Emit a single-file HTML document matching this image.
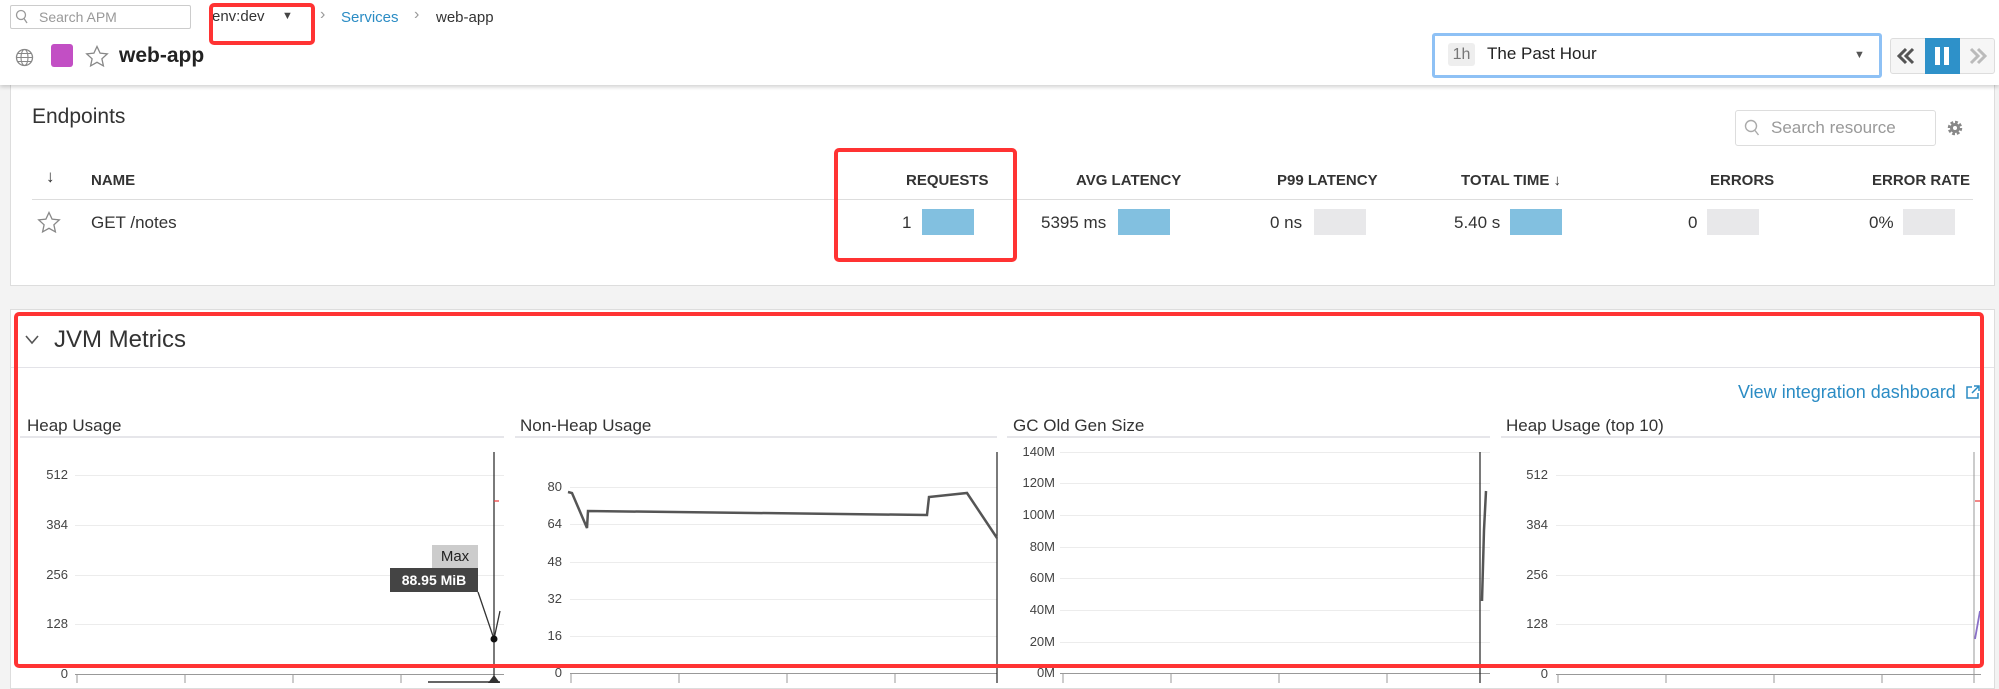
<!DOCTYPE html>
<html><head><meta charset="utf-8"><style>
*{box-sizing:border-box;margin:0;padding:0}
body{width:1999px;height:683px;overflow:hidden;background:#f3f3f3;font-family:"Liberation Sans",sans-serif;color:#333;position:relative}
.a{position:absolute;white-space:nowrap}
.hdr{position:absolute;left:0;top:0;width:1999px;height:85px;background:#fff;box-shadow:0 2px 4px rgba(0,0,0,.18);z-index:2}
.th{font-weight:bold;font-size:15px;color:#333;top:172px}
.td{font-size:17px;top:213px}
.bar{position:absolute;top:209px;width:52px;height:26px}
.b{background:#82c0e0}.g{background:#e8e8ea}
.grid{position:absolute;height:1px;background:#ececec}
.lbl{position:absolute;font-size:13px;color:#444;text-align:right;width:50px}
.ttl{font-size:17px;color:#333;top:416px}
.ul{position:absolute;top:436px;height:2px;background:#e6e6ea}
.red{position:absolute;border:4px solid #f33;border-radius:5px}
</style></head><body>
<div class="hdr">
 <div class="a" style="left:10px;top:5px;width:181px;height:24px;border:1px solid #ccc;border-radius:2px"></div>
 <svg class="a" style="left:15px;top:9px" width="14" height="16"><circle cx="6" cy="6" r="4.5" fill="none" stroke="#999" stroke-width="1.3"/><line x1="9" y1="9.5" x2="12" y2="14" stroke="#999" stroke-width="1.3"/></svg>
 <div class="a" style="left:39px;top:9px;font-size:14px;color:#999">Search APM</div>
 <div class="a" style="left:212px;top:8px;font-size:15px;color:#333">env:dev</div>
 <div class="a" style="left:282px;top:10px;font-size:11px;color:#444">▼</div>
 <div class="a" style="left:320px;top:6px;font-size:16px;color:#999">›</div>
 <div class="a" style="left:341px;top:9px;font-size:15px;color:#2b8cc4">Services</div>
 <div class="a" style="left:414px;top:6px;font-size:16px;color:#999">›</div>
 <div class="a" style="left:436px;top:9px;font-size:15px;color:#333">web-app</div>
 <svg class="a" style="left:15px;top:48px" width="19" height="19" viewBox="0 0 19 19"><circle cx="9.5" cy="9.5" r="8" fill="none" stroke="#888" stroke-width="1.3"/><ellipse cx="9.5" cy="9.5" rx="3.5" ry="8" fill="none" stroke="#888" stroke-width="1.1"/><line x1="1.5" y1="9.5" x2="17.5" y2="9.5" stroke="#888"/><line x1="3" y1="5.5" x2="16" y2="5.5" stroke="#888"/><line x1="3" y1="13.5" x2="16" y2="13.5" stroke="#888"/></svg>
 <div class="a" style="left:51px;top:44px;width:22px;height:23px;background:#c24fc4;border-radius:3px"></div>
 <svg class="a" style="left:85px;top:45px" width="24" height="23" viewBox="0 0 24 23"><path d="M12 1.5l3.1 6.6 7.2.8-5.4 4.9 1.5 7.1L12 17.3l-6.4 3.6 1.5-7.1L1.7 8.9l7.2-.8z" fill="none" stroke="#888" stroke-width="1.3"/></svg>
 <div class="a" style="left:119px;top:44px;font-size:21px;font-weight:bold;color:#222">web-app</div>
 <div class="a" style="left:1432px;top:33px;width:450px;height:45px;border:3px solid #8ec1f5;border-radius:3px;background:#fff"></div>
 <div class="a" style="left:1448px;top:43px;width:27px;height:23px;background:#eee;border-radius:3px;font-size:16px;color:#777;text-align:center;line-height:23px">1h</div>
 <div class="a" style="left:1487px;top:44px;font-size:17px;color:#222">The Past Hour</div>
 <div class="a" style="left:1854px;top:49px;font-size:11px;color:#555">▼</div>
 <div class="a" style="left:1890px;top:38px;width:105px;height:36px;border:1px solid #ddd;border-radius:3px;background:#f6f6f6"></div>
 <svg class="a" style="left:1897px;top:47px" width="20" height="18"><path d="M9 2L2 9l7 7M16 2L9 9l7 7" fill="none" stroke="#555" stroke-width="3"/></svg>
 <div class="a" style="left:1925px;top:38px;width:35px;height:36px;background:#2e91c9"></div>
 <div class="a" style="left:1935px;top:47px;width:5px;height:18px;background:#fff"></div>
 <div class="a" style="left:1944px;top:47px;width:5px;height:18px;background:#fff"></div>
 <svg class="a" style="left:1967px;top:47px" width="20" height="18"><path d="M4 2l7 7-7 7M11 2l7 7-7 7" fill="none" stroke="#bbb" stroke-width="3"/></svg>
</div>

<div class="a" style="left:10px;top:85px;width:1985px;height:201px;background:#fff;border:1px solid #ddd;border-top:none"></div>
<div class="a" style="left:32px;top:105px;font-size:21px;color:#333">Endpoints</div>
<div class="a" style="left:1735px;top:110px;width:201px;height:36px;border:1px solid #ddd;border-radius:3px"></div>
<svg class="a" style="left:1744px;top:119px" width="16" height="18"><circle cx="7" cy="7" r="5.5" fill="none" stroke="#aaa" stroke-width="1.4"/><line x1="11" y1="11.5" x2="14.5" y2="16" stroke="#aaa" stroke-width="1.4"/></svg>
<div class="a" style="left:1771px;top:118px;font-size:17px;color:#999">Search resource</div>
<svg class="a" style="left:1945px;top:118px" width="20" height="20" viewBox="0 0 20 20"><circle cx="10" cy="10" r="5.5" fill="none" stroke="#888" stroke-width="3.5" stroke-dasharray="2.6 1.7"/><circle cx="10" cy="10" r="5" fill="#888"/><circle cx="10" cy="10" r="2" fill="#fff"/></svg>
<div class="a th" style="left:46px;top:167px;font-weight:normal;font-size:17px">↓</div>
<div class="a th" style="left:91px">NAME</div>
<div class="a th" style="left:906px">REQUESTS</div>
<div class="a th" style="left:1076px">AVG LATENCY</div>
<div class="a th" style="left:1277px">P99 LATENCY</div>
<div class="a th" style="left:1461px">TOTAL TIME ↓</div>
<div class="a th" style="left:1710px">ERRORS</div>
<div class="a th" style="left:1872px">ERROR RATE</div>
<div class="a" style="left:32px;top:199px;width:1941px;height:1px;background:#ddd"></div>
<svg class="a" style="left:37px;top:211px" width="24" height="23" viewBox="0 0 24 23"><path d="M12 1.5l3.1 6.6 7.2.8-5.4 4.9 1.5 7.1L12 17.3l-6.4 3.6 1.5-7.1L1.7 8.9l7.2-.8z" fill="none" stroke="#888" stroke-width="1.3"/></svg>
<div class="a td" style="left:91px">GET /notes</div>
<div class="a td" style="left:902px">1</div><div class="bar b" style="left:922px"></div>
<div class="a td" style="left:1041px">5395 ms</div><div class="bar b" style="left:1118px"></div>
<div class="a td" style="left:1270px">0 ns</div><div class="bar g" style="left:1314px"></div>
<div class="a td" style="left:1454px">5.40 s</div><div class="bar b" style="left:1510px"></div>
<div class="a td" style="left:1688px">0</div><div class="bar g" style="left:1707px"></div>
<div class="a td" style="left:1869px">0%</div><div class="bar g" style="left:1903px"></div>
<div class="red" style="left:834px;top:148px;width:183px;height:114px"></div>
<div class="red" style="left:209px;top:3px;width:106px;height:42px;z-index:3"></div>

<div class="a" style="left:10px;top:309px;width:1985px;height:380px;background:#fff;border:1px solid #ddd"></div>
<svg class="a" style="left:24px;top:334px" width="16" height="12"><path d="M2 2l6 7 6-7" fill="none" stroke="#555" stroke-width="1.6"/></svg>
<div class="a" style="left:54px;top:326px;font-size:24px;color:#333">JVM Metrics</div>
<div class="a" style="left:11px;top:367px;width:1983px;height:1px;background:#e3e3e8"></div>
<div class="a" style="left:1738px;top:382px;font-size:18px;color:#2b8cc4">View integration dashboard</div>
<svg class="a" style="left:1965px;top:384px" width="16" height="16"><path d="M7 3H2v11h11V9" fill="none" stroke="#2b8cc4" stroke-width="1.5"/><path d="M9 2h5v5M14 2L7 9" fill="none" stroke="#2b8cc4" stroke-width="1.5"/></svg>
<div class="a ttl" style="left:27px">Heap Usage</div><div class="ul" style="left:20px;width:484px"></div>
<div class="a ttl" style="left:520px">Non-Heap Usage</div><div class="ul" style="left:515px;width:482px"></div>
<div class="a ttl" style="left:1013px">GC Old Gen Size</div><div class="ul" style="left:1007px;width:483px"></div>
<div class="a ttl" style="left:1506px">Heap Usage (top 10)</div><div class="ul" style="left:1501px;width:480px"></div>

<div class="grid" style="left:75px;top:475px;width:429px"></div><div class="lbl" style="left:18px;top:467px">512</div>
<div class="grid" style="left:75px;top:525px;width:429px"></div><div class="lbl" style="left:18px;top:517px">384</div>
<div class="grid" style="left:75px;top:575px;width:429px"></div><div class="lbl" style="left:18px;top:567px">256</div>
<div class="grid" style="left:75px;top:624px;width:429px"></div><div class="lbl" style="left:18px;top:616px">128</div>
<div class="grid" style="left:75px;top:674px;width:429px;background:#999"></div><div class="lbl" style="left:18px;top:666px">0</div>
<div class="grid" style="left:570px;top:487px;width:427px"></div><div class="lbl" style="left:512px;top:479px">80</div>
<div class="grid" style="left:570px;top:524px;width:427px"></div><div class="lbl" style="left:512px;top:516px">64</div>
<div class="grid" style="left:570px;top:562px;width:427px"></div><div class="lbl" style="left:512px;top:554px">48</div>
<div class="grid" style="left:570px;top:599px;width:427px"></div><div class="lbl" style="left:512px;top:591px">32</div>
<div class="grid" style="left:570px;top:636px;width:427px"></div><div class="lbl" style="left:512px;top:628px">16</div>
<div class="grid" style="left:570px;top:673px;width:427px;background:#999"></div><div class="lbl" style="left:512px;top:665px">0</div>
<div class="grid" style="left:1060px;top:452px;width:430px"></div><div class="lbl" style="left:1005px;top:444px">140M</div>
<div class="grid" style="left:1060px;top:483px;width:430px"></div><div class="lbl" style="left:1005px;top:475px">120M</div>
<div class="grid" style="left:1060px;top:515px;width:430px"></div><div class="lbl" style="left:1005px;top:507px">100M</div>
<div class="grid" style="left:1060px;top:547px;width:430px"></div><div class="lbl" style="left:1005px;top:539px">80M</div>
<div class="grid" style="left:1060px;top:578px;width:430px"></div><div class="lbl" style="left:1005px;top:570px">60M</div>
<div class="grid" style="left:1060px;top:610px;width:430px"></div><div class="lbl" style="left:1005px;top:602px">40M</div>
<div class="grid" style="left:1060px;top:642px;width:430px"></div><div class="lbl" style="left:1005px;top:634px">20M</div>
<div class="grid" style="left:1060px;top:673px;width:430px;background:#999"></div><div class="lbl" style="left:1005px;top:665px">0M</div>
<div class="grid" style="left:1556px;top:475px;width:425px"></div><div class="lbl" style="left:1498px;top:467px">512</div>
<div class="grid" style="left:1556px;top:525px;width:425px"></div><div class="lbl" style="left:1498px;top:517px">384</div>
<div class="grid" style="left:1556px;top:575px;width:425px"></div><div class="lbl" style="left:1498px;top:567px">256</div>
<div class="grid" style="left:1556px;top:624px;width:425px"></div><div class="lbl" style="left:1498px;top:616px">128</div>
<div class="grid" style="left:1556px;top:674px;width:425px;background:#999"></div><div class="lbl" style="left:1498px;top:666px">0</div>

<svg class="a" style="left:0;top:0" width="1999" height="683">
 <g stroke="#999" stroke-width="1">
  <path d="M77 674v9M185 674v9M293 674v9M401 674v9M571 674v9M679 674v9M787 674v9M895 674v9M1063 674v9M1171 674v9M1279 674v9M1387 674v9M1558 674v9M1666 674v9M1774 674v9M1882 674v9"/>
 </g>
 <line x1="494" y1="452" x2="494" y2="683" stroke="#222" stroke-width="1.2"/>
 <line x1="997" y1="452" x2="997" y2="683" stroke="#222" stroke-width="1.2"/>
 <line x1="1480" y1="452" x2="1480" y2="683" stroke="#222" stroke-width="1.2"/>
 <line x1="1974" y1="452" x2="1974" y2="683" stroke="#999" stroke-width="1"/>
 <line x1="494" y1="501" x2="499" y2="501" stroke="#e44" stroke-width="1.3"/>
 <line x1="1975" y1="501" x2="1981" y2="501" stroke="#e44" stroke-width="1.3"/>
 <polyline points="478,592 494,639 500,611" fill="none" stroke="#333" stroke-width="1.3"/>
 <circle cx="494" cy="639" r="3.5" fill="#111"/>
 <polygon points="488,683 494,675 500,683" fill="#333"/>
 <line x1="428" y1="682" x2="500" y2="682" stroke="#333" stroke-width="1.5"/>
 <polyline points="568,492 572,493 587,528 588,511 927,515 929,497 967,493 997,538" fill="none" stroke="#555" stroke-width="2.5"/>
 <polyline points="1482,601 1484,530 1486,491" fill="none" stroke="#555" stroke-width="2.5"/>
 <polyline points="1975,639 1980,611" fill="none" stroke="#8a70c8" stroke-width="1.8"/>
</svg>
<div class="a" style="left:432px;top:545px;width:46px;height:23px;background:#ccc;font-size:15px;color:#222;text-align:center;line-height:23px">Max</div>
<div class="a" style="left:390px;top:568px;width:88px;height:24px;background:#444;font-size:14px;font-weight:bold;color:#fff;text-align:center;line-height:24px">88.95 MiB</div>

<div class="red" style="left:14px;top:312px;width:1970px;height:356px"></div>
</body></html>
